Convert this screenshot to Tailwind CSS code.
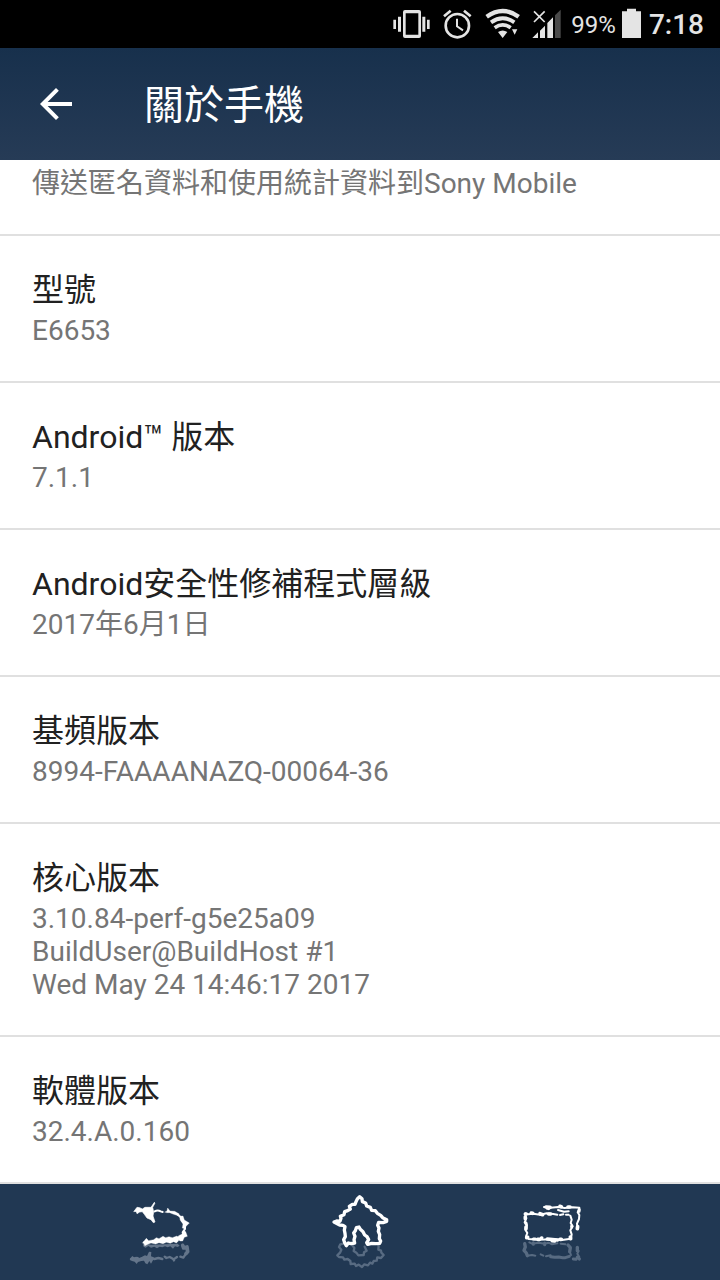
<!DOCTYPE html>
<html lang="zh-Hant">

<head>
    <meta charset="UTF-8">
    <meta name="viewport" content="width=device-width, initial-scale=1.0">
    <title>關於手機</title>
    <script src="https://cdn.jsdelivr.net/npm/@tailwindcss/browser@4"></script>
</head>

<body class="min-h-screen flex flex-col bg-white font-['Roboto','Noto_Sans_CJK_TC',sans-serif] text-[#212121]">

    <!-- status bar -->
    <div class="h-12 bg-black text-[#e4e4e4] flex items-center justify-end pr-4">
        <svg class="w-[37px] h-12 mr-[13px]" viewBox="40 0 111 144" fill="currentColor" aria-hidden="true">
            <path fill-rule="evenodd" d="M76 30h42q6 0 6 6v72q0 6-6 6H76q-6 0-6-6V36q0-6 6-6zm2 10v64h38V40z" />
            <path d="M41 59h8v28h-8zM55 50h9v45h-9zM128 50h9v45h-9zM142 59h8v28h-8z" />
        </svg>
        <svg class="w-[29px] h-12 mr-[13px]" viewBox="190 0 87 144" fill="none" stroke="currentColor" stroke-width="8" aria-hidden="true">
            <circle cx="233" cy="77" r="35" />
            <path stroke-width="6" d="M232 56v23l18 12" />
            <path d="M193 49l20-17M273 49l-20-17" />
        </svg>
        <svg class="w-[35px] h-12 mr-3" viewBox="316 0 105 144" fill="currentColor" aria-hidden="true">
            <path fill="none" stroke="currentColor" stroke-width="13" d="M321 50Q369 16 417 50" />
            <path fill="none" stroke="currentColor" stroke-width="12" d="M334 67Q369 43 404 67" />
            <path fill="none" stroke="currentColor" stroke-width="11" d="M345 83Q369 66 393 83" />
            <path d="M355 96q14-9 28 0l-14 18zM397 88h16l-8 16z" />
        </svg>
        <svg class="w-[29px] h-12 mr-[10px]" viewBox="456 0 87 144" fill="currentColor" aria-hidden="true">
            <path fill="#4a4a4a" d="M525 46l17-17v85h-17z" />
            <path d="M457 114l17-17v17zM480 92l15-15v37h-15zM502 69l17-17v62h-17z" />
            <path fill="none" stroke="currentColor" stroke-width="5" d="M462 34l32 32M494 34l-32 32" />
        </svg>
        <span class="text-2xl mr-[6px] pt-[2px]">99%</span>
        <svg class="w-[19px] h-12 mr-2" viewBox="183 0 57 144" fill="currentColor" aria-hidden="true">
            <path d="M198 26h27v8h15v80h-57V34h15z" />
        </svg>
        <span class="text-[28px] font-medium pt-[2px]">7:18</span>
    </div>

    <header class="h-28 flex items-center gap-16 px-8 bg-linear-to-b from-[#17304c] to-[#263b56] text-white">
        <button type="button" aria-label="返回" class="size-12">
            <svg class="size-12" viewBox="0 0 24 24" fill="currentColor">
                <path d="M20 11H7.83l5.59-5.59L12 4l-8 8 8 8 1.41-1.41L7.83 13H20z" />
            </svg>
        </button>
        <h1 class="text-[40px] leading-[48px] pt-1">關於手機</h1>
    </header>

    <main class="flex-1">
        <ul class="divide-y-2 divide-[#e0e0e0] border-b-2 border-[#e0e0e0] text-[28px] leading-[33px] text-[#757575]">
            <li class="px-8 pt-[7px] pb-[34px]">
                <p>傳送匿名資料和使用統計資料到Sony Mobile</p>
            </li>
            <li class="px-8 py-[34px] flex flex-col gap-1">
                <h2 class="text-[32px] leading-10 text-[#212121]">型號</h2>
                <p>E6653</p>
            </li>
            <li class="px-8 py-[34px] flex flex-col gap-1">
                <h2 class="text-[32px] leading-10 text-[#212121]">Android™ 版本</h2>
                <p>7.1.1</p>
            </li>
            <li class="px-8 py-[34px] flex flex-col gap-1">
                <h2 class="text-[32px] leading-10 text-[#212121]">Android安全性修補程式層級</h2>
                <p>2017年6月1日</p>
            </li>
            <li class="px-8 py-[34px] flex flex-col gap-1">
                <h2 class="text-[32px] leading-10 text-[#212121]">基頻版本</h2>
                <p>8994-FAAAANAZQ-00064-36</p>
            </li>
            <li class="px-8 py-[34px] flex flex-col gap-1">
                <h2 class="text-[32px] leading-10 text-[#212121]">核心版本</h2>
                <p>3.10.84-perf-g5e25a09<br>BuildUser@BuildHost #1<br>Wed May 24 14:46:17 2017</p>
            </li>
            <li class="px-8 py-[34px] flex flex-col gap-1">
                <h2 class="text-[32px] leading-10 text-[#212121]">軟體版本</h2>
                <p>32.4.A.0.160</p>
            </li>
        </ul>
    </main>

    <!-- navigation bar -->
    <nav class="h-24 bg-[#213853] flex justify-between px-[120px]">
        <button type="button" aria-label="上一頁" class="w-[90px] h-24">
            <svg class="w-[90px] h-24" viewBox="-15 -33 270 288" stroke-linejoin="round" stroke-linecap="round">
                <g fill="#64758a" stroke="#64758a">
                    <path stroke="none" d="M54 150l14-3 10 2 80-3 6 6-6 4-8-2-6 7-8-7-8 3-8-3-8 3-8-2-8 5-8-5-10 3-8-5-8 5-6-3z" />
                    <path fill="none" stroke-width="11" d="M173 151l3 8 10-3 2 14-5 6" />
                    <path fill="none" stroke-width="7" d="M183 176l-8 12-9-3M156 186l-10 7-12-7-10 3-5-4M112 192l-12-3-12 3M56 189l-16 4-6-4-16 4" />
                    <path stroke="none" d="M14 192l8-9 8 6 8-4 6 5 10-6 6-3 6 2 6-13 7 1-1 13 8 3 4 5-6 4-6 10-5-8-6 10-6-3-4-8-8 1-10 3-4 6-6-7-8-2zM140 190l8 0 3 8-6 2z" />
                </g>
                <g fill="#fff" stroke="#fff">
                    <path stroke-width="2" d="M27 49l9-12 8 1 8 4 8-5 18 0 10-15 2 2-7 13 3 14-2 12 6 18-5 2-7-9-12-5-8-11-6-8-8 1-8 5-2-6z" />
                    <path fill="none" stroke-width="6" d="M89 49q9-5 18 0l6 2" />
                    <path d="M120 51l6-3 2-9 7 9 14 1 14 8-3 5-14-4-12-5-8 0z" />
                    <path fill="none" stroke-width="6" d="M158 59l9 7 5 12 8 10 0 14-7 10" />
                    <path d="M164 64l10-1 4 12 15 9-9 9-6 8-6-2 2-12-8-11zM176 106l6 4 5 14-9 3-5 11-8 0-9-8 5-8 9-4z" />
                    <path d="M53 142l5-5 6-7 7 7 15-3 8-6 8 3 12-7 8 4 10-3 10 3 14-5 6 6-1 8-7 7-8-4-10 5-12-3-10 4-12-3-10 4-14-3-10 4-8 4z" />
                </g>
            </svg>
        </button>
        <button type="button" aria-label="首頁" class="w-[90px] h-24">
            <svg class="w-[90px] h-24" viewBox="0 24 270 288" fill="none" stroke-linejoin="round" stroke-linecap="round">
                <path stroke="#586b82" stroke-width="7" d="M86 203l-10 2-4 8 7 8-4 9-8 8 5 5 12 1 4 7 10-2 8 6 1 9 12-1 4 7 8-4 10 7 7-8 11 3 6-8 7 3 4-8 9-1 2-10 11 2 8-9-7-7-1-6-8-3 1-12-4-8M112 208l6 8-2 9 8 5 6 8 16-1 1-8 8-5-6-12" />
                <path stroke="#fff" stroke-width="10" d="M57 138l8-3 10 1 3-9-2-6 11-5 2-9 9-3 8-5-3-8 9-6 8 0 3-8 4-8 7-7 7 6 1 9 10 4 3 9 11 4 4 9 11 1 6 8 10 6 6 7 12 6v5l-11 4-13-1-3 9 4 8-2 10 4 10-1 12 4 7-3 7-12 1-12-1-12 3-3-5 6-9-5-9-7-5-5-10-8-7-4-7-8 2-3 9-5 7 4 10-3 10 2 10-11 2-8-2-6 8-5-9-3-9 5-9-1-10-2-10 2-10-6-4-10-1z" />
            </svg>
        </button>
        <button type="button" aria-label="最近使用的應用程式" class="w-[90px] h-24">
            <svg class="w-[90px] h-24" viewBox="-24 -33 270 288" stroke-linejoin="round" stroke-linecap="round">
                <g fill="none" stroke="#586b82">
                    <path stroke-width="10" d="M20 146l2 10-4 10 7 8 3 8M150 150l7 8-2 12M178 157l0 10M178 187l6 5" />
                    <path stroke-width="6" d="M34 142l8 4 20-3 18 3 12-3 10 5 16-3M128 146l14 2M28 182l14-2 10 2M68 178l8 4M84 184l14-3M156 172l3 8M182 168l-4 8 6 10" />
                    <path stroke-width="9" d="M98 185l12 2 12-1 12 2 8 0 12-4M166 192l8 1M46 143l0 5M80 144l0 5" />
                </g>
                <g fill="none" stroke="#fff">
                    <path stroke-width="6" d="M22 55l8 3 16-2 20 3 20-4 20 2 12 2M126 60l10-2M144 59l8 0M22 58l3 12-5 12 7 10-5 12 6 10-4 10 8 8M32 132l30 2 40-1 30 2 26-4M157 62l4 12-3 10 6 10-7 12 4 12-2 12M78 36l20 2 22-2 20 3 24-2 20 1M184 40l-5 12 5 8-1 12-6 14 2 16M120 45l18 5 14-1" />
                    <path stroke-width="11" d="M22 57l3 0M40 54l4 1M66 56l8 3M92 57l6 0M24 96l0 5M26 128l3-1M59 133l6 0M88 132l30 3M126 133l4 0M157 126l1 5M179 95l-1 6M84 36l12 1M126 34l4 1M150 36l6 0" />
                    <path stroke-width="9" d="M21 65l0 6M24 84l1 4M70 128l2 0M46 132l6 0M102 138l8 1M161 93l0 3M184 44l-1 5M88 40l4 1" />
                </g>
            </svg>
        </button>
    </nav>
</body>

</html>
